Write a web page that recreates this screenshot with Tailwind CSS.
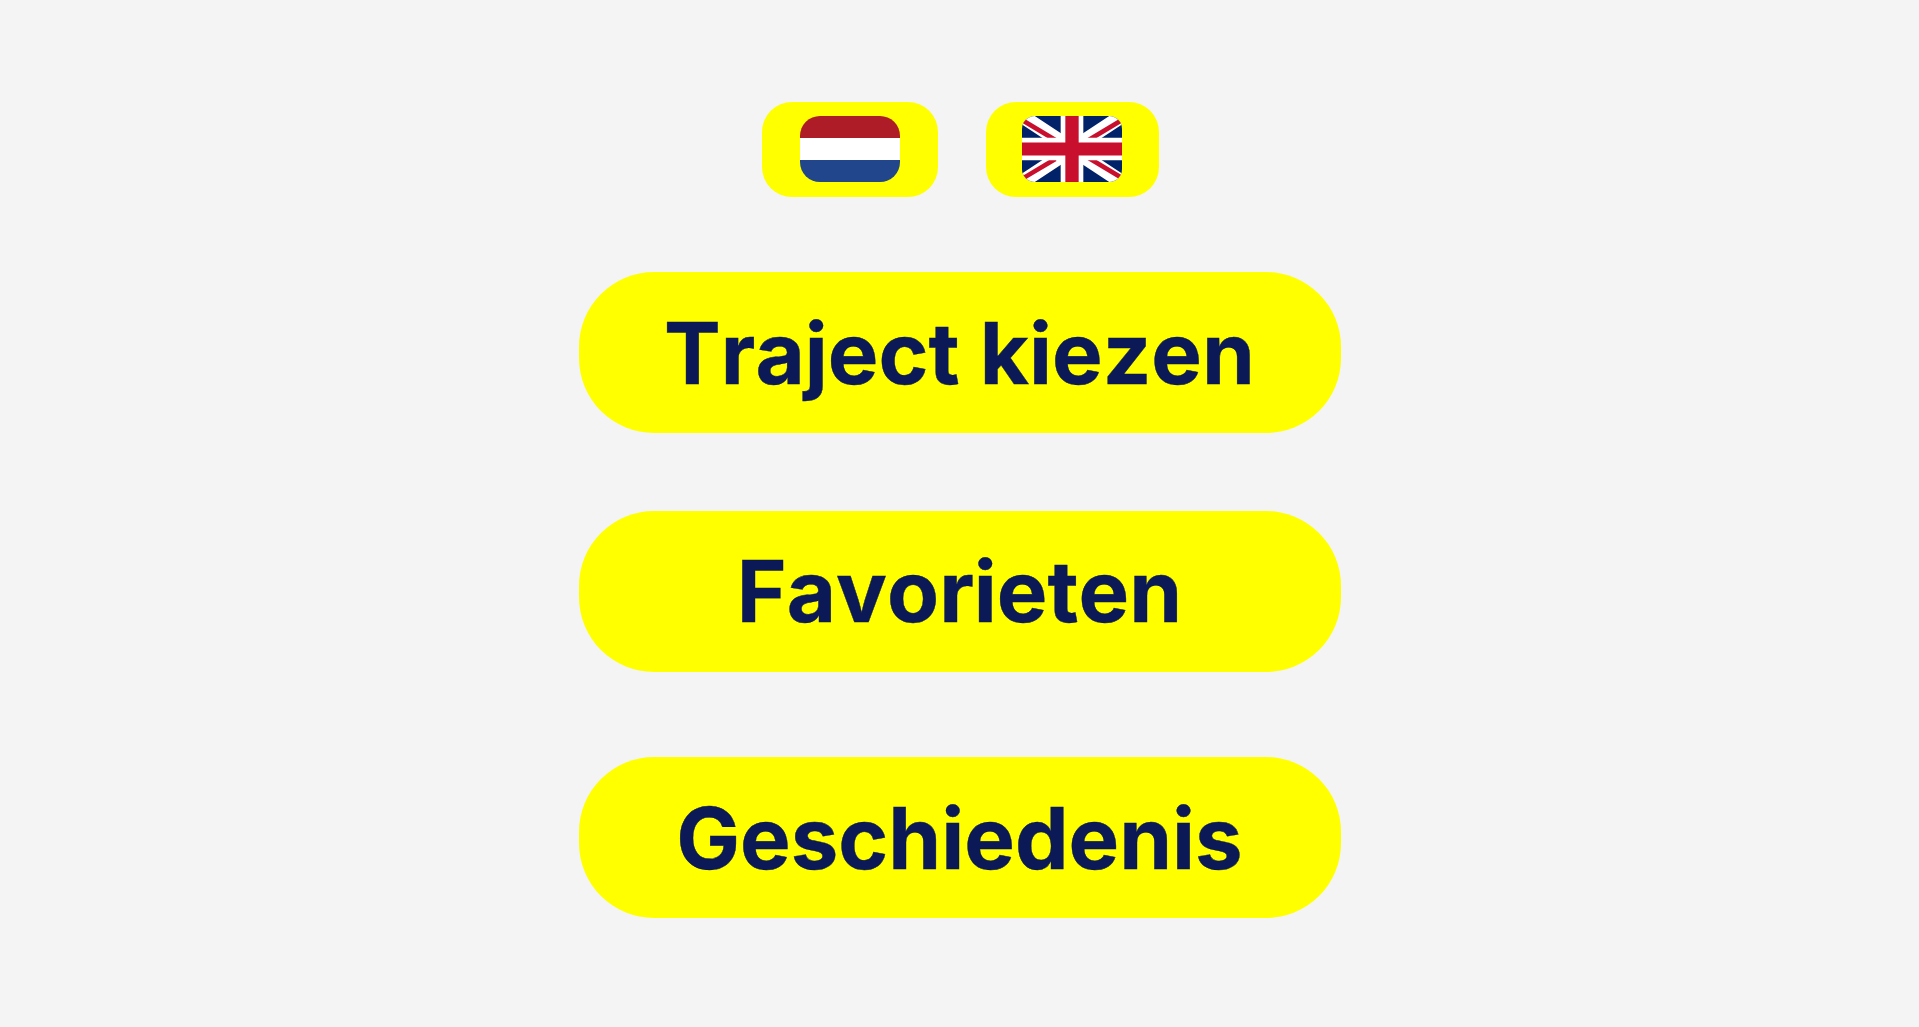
<!DOCTYPE html>
<html lang="en">
<head>
  <meta charset="UTF-8">
  <meta name="viewport" content="width=device-width, initial-scale=1.0">
  <title>Menu</title>
  <script src="https://cdn.jsdelivr.net/npm/@tailwindcss/browser@4"></script>
</head>
<body class="bg-[#f4f4f4] font-['Inter',sans-serif]">
  <div class="min-h-screen flex flex-col items-center pt-[102px]">
    <!-- language switch -->
    <div class="flex gap-[48px] ml-[2px]">
      <button class="w-[176px] h-[95px] pb-[1px] bg-[#ffff00] rounded-[30px] flex items-center justify-center">
        <span class="w-[100px] h-[66px] rounded-[20px] overflow-hidden flex flex-col">
          <span class="h-[22px] bg-[#ae1c28]"></span>
          <span class="h-[22px] bg-white"></span>
          <span class="h-[22px] bg-[#21468b]"></span>
        </span>
      </button>
      <button class="w-[173px] h-[95px] pb-[1px] bg-[#ffff00] rounded-[30px] flex items-center justify-center">
        <svg class="w-[100px] h-[66px] -ml-[1px] rounded-[13px]" viewBox="0 0 60 40" preserveAspectRatio="none">
          <rect width="60" height="40" fill="#012169"/>
          <path d="M0 0L60 40M60 0L0 40" stroke="#fff" stroke-width="8.5"/>
          <path d="M1 3L20 14.5M59 3L40 14.5M1 37.5L20 26M59 37L40 25.5" stroke="#c8102e" stroke-width="2.8"/>
          <path d="M30 0V40M0 20H60" stroke="#fff" stroke-width="13.6"/>
          <path d="M30 0V40M0 20H60" stroke="#c8102e" stroke-width="8"/>
        </svg>
      </button>
    </div>

    <button class="mt-[75px] w-[762px] h-[161px] pt-[2px] bg-[#ffff00] rounded-[75px] text-[#0b1957] text-[85px] font-bold leading-none [font-kerning:none] [-webkit-text-stroke:0.4px_#0b1957]">Traject kiezen</button>
    <button class="mt-[78px] w-[762px] h-[161px] pb-[1px] bg-[#ffff00] rounded-[75px] text-[#0b1957] text-[85px] font-bold leading-none [font-kerning:none] [-webkit-text-stroke:0.4px_#0b1957]">Favorieten</button>
    <button class="mt-[85px] w-[762px] h-[161px] pt-[2px] bg-[#ffff00] rounded-[75px] text-[#0b1957] text-[85px] font-bold leading-none [font-kerning:none] [-webkit-text-stroke:0.4px_#0b1957]">Geschiedenis</button>
  </div>
</body>
</html>
